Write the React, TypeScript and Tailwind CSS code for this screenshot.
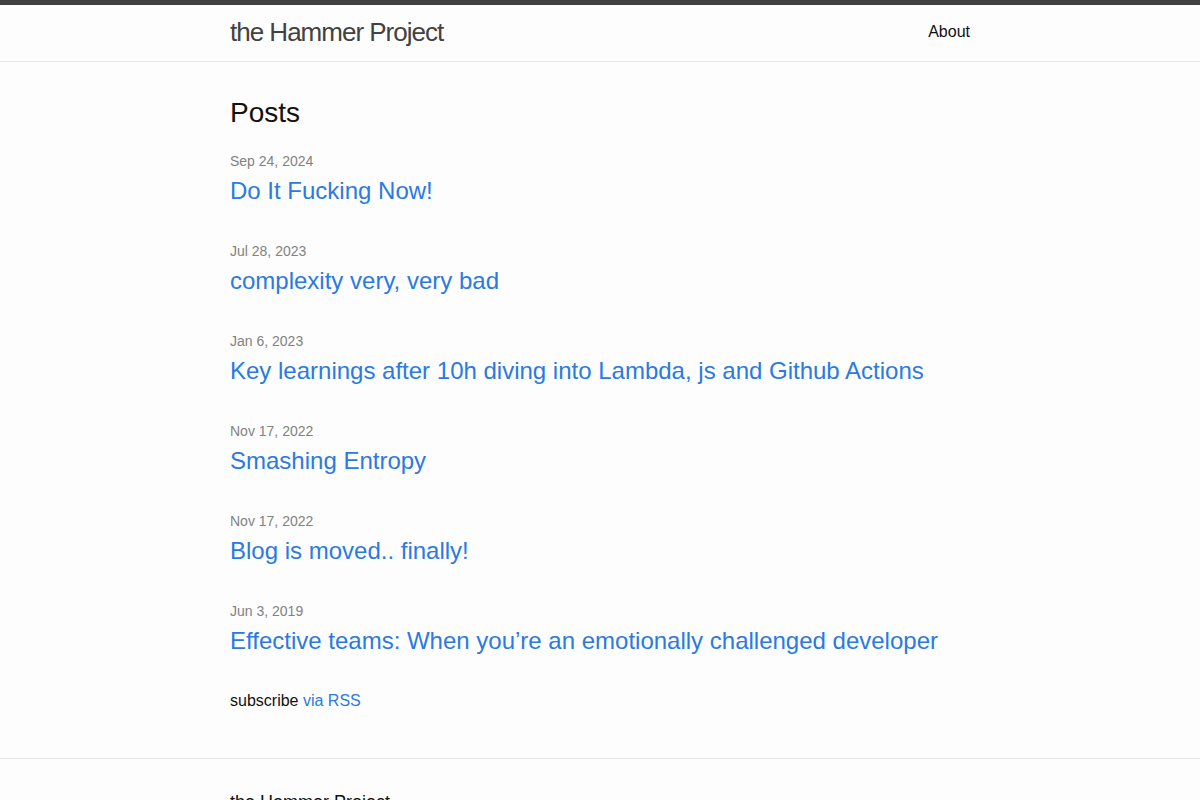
import React from "react";

const posts = [
  { date: "Sep 24, 2024", title: "Do It Fucking Now!" },
  { date: "Jul 28, 2023", title: "complexity very, very bad" },
  { date: "Jan 6, 2023", title: "Key learnings after 10h diving into Lambda, js and Github Actions" },
  { date: "Nov 17, 2022", title: "Smashing Entropy" },
  { date: "Nov 17, 2022", title: "Blog is moved.. finally!" },
  { date: "Jun 3, 2019", title: "Effective teams: When you\u2019re an emotionally challenged developer" },
];

export default function App() {
  return (
    <div
      className="h-screen overflow-hidden bg-[#fdfdfd] text-[#111] text-[16px] leading-[1.5]"
      style={{ fontFamily: '"Liberation Sans", Helvetica, Arial, sans-serif' }}
    >
      <header className="border-t-[5px] border-t-[#424242] border-b border-b-[#e8e8e8]">
        <div className="mx-auto w-[740px] h-[56px] flex items-start justify-between">
          <a className="text-[26px] leading-[54px] tracking-[-1px] text-[#424242] font-light">
            the Hammer Project
          </a>
          <nav>
            <a className="text-[#111] leading-[54px]">About</a>
          </nav>
        </div>
      </header>
      <main className="h-[696px]">
        <div className="mx-auto w-[740px] pt-[30px]">
          <h2 className="text-[28px] leading-[42px] mb-[17px]">Posts</h2>
          <ul>
            {posts.map((p, i) => (
              <li key={i} className={i === posts.length - 1 ? "mb-[30px]" : "mb-[32px]"}>
                <div className="text-[14px] leading-[21px] text-[#828282]">{p.date}</div>
                <h3 className="mt-[1px]">
                  <a className="block text-[24px] leading-[36px] text-[#2a7ae2]">{p.title}</a>
                </h3>
              </li>
            ))}
          </ul>
          <p className="leading-[24px]">
            subscribe <a className="text-[#2a7ae2]">via RSS</a>
          </p>
        </div>
      </main>
      <footer className="border-t border-t-[#e8e8e8] pt-[30px]">
        <div className="mx-auto w-[740px]">
          <h2 className="text-[18px] leading-[27px] mb-[15px]">the Hammer Project</h2>
          <div className="text-[15px] text-[#828282]">the Hammer Project</div>
        </div>
      </footer>
    </div>
  );
}
